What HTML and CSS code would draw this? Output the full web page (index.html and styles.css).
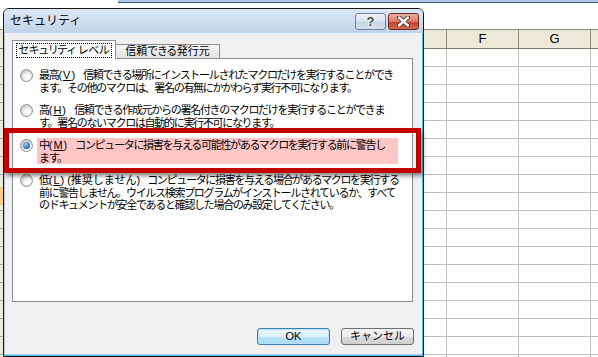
FILE: index.html
```html
<!DOCTYPE html>
<html lang="ja">
<head>
	<meta charset="UTF-8">
	<title>セキュリティ</title>
	<link rel="stylesheet" href="styles.css">
</head>
<body>
	<!-- 背景のワークシート -->
	<div class="sheet">
		<div class="formula"><span class="formula-bar"></span></div>
		<div class="colhead">
			<span class="corner"></span>
			<span class="col col-e"></span>
			<span class="col">F</span>
			<span class="col">G</span>
			<span class="col col-h"></span>
		</div>
		<div class="rows">
			<div class="rowhead"><span class="active-row"></span></div>
			<div class="cells"></div>
		</div>
	</div>

	<!-- ダイアログ -->
	<div class="dialog">
		<div class="titlebar">
			<span class="title">セキュリティ</span>
			<a href="#" class="tb-btn help">?</a>
			<a href="#" class="tb-btn close">
				<svg width="15" height="11" viewBox="0 0 15 11">
					<path d="M3 1.5 L12 9.5 M12 1.5 L3 9.5" stroke="#5a2a24" stroke-width="4.2" stroke-linecap="round"/>
					<path d="M3 1.5 L12 9.5 M12 1.5 L3 9.5" stroke="#fff" stroke-width="2.4" stroke-linecap="round"/>
				</svg>
			</a>
		</div>
		<div class="content">
			<div class="tabs">
				<div class="tab tab-active"><span class="focus">セキュリティ レベル</span></div>
				<div class="tab">信頼できる発行元</div>
			</div>
			<div class="panel">
				<ul class="options">
					<li class="option">
						<span class="radio"></span>
						<p class="text">最高<span class="key">(<u>V</u>)</span>信頼できる場所にインストールされたマクロだけを実行することができ<br>ます。その他のマクロは、署名の有無にかかわらず実行不可になります。</p>
					</li>
					<li class="option">
						<span class="radio"></span>
						<p class="text">高<span class="key">(<u>H</u>)</span>信頼できる作成元からの署名付きのマクロだけを実行することができま<br>す。署名のないマクロは自動的に実行不可になります。</p>
					</li>
					<li class="option">
						<span class="radio checked"></span>
						<p class="text mark">中<span class="key">(<u>M</u>)</span>コンピュータに損害を与える可能性があるマクロを実行する前に警告し<br>ます。</p>
					</li>
					<li class="option">
						<span class="radio"></span>
						<p class="text">低<span class="key key-s">(<u>L</u>)</span><span class="key key-p">(推奨しません)</span>コンピュータに損害を与える場合があるマクロを実行する<br>前に警告しません。ウイルス検索プログラムがインストールされているか、すべて<br>のドキュメントが安全であると確認した場合のみ設定してください。</p>
					</li>
				</ul>
			</div>
			<div class="buttons">
				<input type="button" value="OK" class="btn btn-default">
				<input type="button" value="キャンセル" class="btn">
			</div>
		</div>
	</div>

	<!-- 強調枠 -->
	<div class="callout"></div>
</body>
</html>
```

FILE: styles.css
```css
/*reset*/
div, ul, li, p, span, a, input{
	margin: 0;
	padding: 0;
}
li{
	list-style: none;
}
a{
	text-decoration: none;
	color: #000;
}
html, body{
	margin: 0;
	width: 598px;
	height: 357px;
	overflow: hidden;
}
body{
	position: relative;
	font: 11px/12.5px "Liberation Sans", "Noto Sans CJK JP", sans-serif;
	color: #000;
	background: #fff;
}
/*ワークシート*/
.sheet{
	display: flex;
	flex-direction: column;
	height: 357px;
}
.formula{
	height: 29px;
	padding-left: 118px;
	box-sizing: border-box;
}
.formula-bar{
	display: block;
	height: 2px;
	background: #a9c3e6;
	border-bottom: 1px solid #3b5b8c;
}
.colhead{
	display: flex;
	height: 20px;
	box-sizing: border-box;
	background: #ece9d8;
	border-top: 1px solid #8c8a7c;
	border-bottom: 1px solid #7e7c6a;
}
.corner{
	width: 3px;
}
.col{
	width: 72px;
	box-sizing: border-box;
	border-right: 1px solid #8e8b78;
	font: 13px/18px "Liberation Sans", sans-serif;
	text-align: center;
}
.col-e{
	width: 444px;
}
.col-h{
	flex: 1;
	border-right: none;
}
.rows{
	flex: 1;
	display: flex;
}
.rowhead{
	position: relative;
	width: 3px;
	background: repeating-linear-gradient(to bottom, #ece9d8 0 17px, #aca899 17px 18px);
}
.active-row{
	position: absolute;
	left: 0;
	top: 138px;
	width: 3px;
	height: 18px;
	background: #f9c98a;
}
.cells{
	flex: 1;
	background:
		repeating-linear-gradient(to bottom, transparent 0 17px, #c0c0c0 17px 18px),
		repeating-linear-gradient(to right, transparent 0 71px, #c0c0c0 71px 72px);
	background-position: 0 0, 12px 0;
}
/*ダイアログ*/
.dialog{
	position: absolute;
	left: 3px;
	top: 8px;
	width: 421px;
	height: 349px;
	box-sizing: border-box;
	display: flex;
	flex-direction: column;
	background: #f0f0f0;
	border: 1px solid #161616;
	border-radius: 6px 6px 0 0;
	box-shadow: inset 1px 0 0 #b4cbe4, inset -1px -1px 0 #3cc3ec, inset 0 -2px 0 #b4cbe4;
}
.titlebar{
	display: flex;
	height: 24px;
	padding: 4px 4px 0 6px;
	box-sizing: border-box;
	background: linear-gradient(#dce7f4, #c1d3e9);
	border-radius: 5px 5px 0 0;
}
.title{
	flex: 1;
	font-size: 12px;
	line-height: 17px;
}
.tb-btn{
	display: flex;
	align-items: center;
	justify-content: center;
	width: 31px;
	height: 17px;
	box-sizing: border-box;
	border: 1px solid #6f809a;
	border-radius: 3px;
}
.help{
	margin-right: 2px;
	background: linear-gradient(#eef3fa, #d8e2ef 50%, #c4d3e6 51%, #d3dfee);
	font: bold 13px/15px "Liberation Sans", sans-serif;
	color: #4a4a4a;
	text-shadow: 0 0 1px #fff, 1px 0 0 #fff, -1px 0 0 #fff;
}
.close{
	background: linear-gradient(#eab0a2, #db7a66 50%, #c4412d 51%, #d2674c);
	border-color: #6c2820;
}
.content{
	flex: 1;
	display: flex;
	flex-direction: column;
	padding: 7px 0 0 8px;
}
/*タブ*/
.tabs{
	display: flex;
	align-items: flex-end;
	height: 18px;
	position: relative;
	z-index: 1;
	font-feature-settings: "palt";
}
.tab{
	width: 105px;
	height: 14px;
	margin-left: -1px;
	box-sizing: border-box;
	border: 1px solid #898c95;
	border-bottom: none;
	background: linear-gradient(#f4f4f4, #e3e3e3);
	text-align: center;
	line-height: 13px;
}
.tab-active{
	width: 104px;
	height: 19px;
	margin: 0 0 -1px 0;
	padding: 2px 0 0 3px;
	background: #fff;
	position: relative;
	z-index: 1;
}
.focus{
	display: block;
	width: 96px;
	height: 15px;
	box-sizing: border-box;
	border: 1px dotted #000;
	line-height: 13px;
}
.panel{
	width: 401px;
	height: 244px;
	box-sizing: border-box;
	padding: 10px 0 0 7px;
	background: #fff;
	border: 1px solid #898c95;
}
.options{
	display: flex;
	flex-direction: column;
	gap: 10px;
}
.option{
	display: flex;
	gap: 6px;
}
.radio{
	flex: none;
	width: 13px;
	height: 13px;
	box-sizing: border-box;
	border: 1px solid #8e8f8f;
	border-radius: 50%;
	background: radial-gradient(circle at 60% 65%, #fdfdfd 0 2px, #e2e2e2 5px, #d0d0d0 6px);
	position: relative;
}
.radio.checked::after{
	content: "";
	position: absolute;
	left: 2px;
	top: 2px;
	width: 7px;
	height: 7px;
	border-radius: 50%;
	background: radial-gradient(circle at 40% 35%, #9fd2fb, #2a72c6 60%, #1b4f96);
}
.text{
	letter-spacing: -1.3px;
	white-space: nowrap;
}
.key{
	letter-spacing: 1px;
	margin-right: 7px;
}
.key-s{
	margin-right: 2px;
}
.key-p{
	letter-spacing: 0;
}
.key u{
	text-decoration-thickness: 1px;
	text-underline-offset: 1px;
}
.mark{
	width: 359px;
	margin: -1px 0 0 -2px;
	padding: 1px 0 0 2px;
	background: #ffc6c6;
}
/*ボタン*/
.buttons{
	display: flex;
	justify-content: flex-end;
	gap: 11px;
	margin-top: 26px;
	padding-right: 9px;
}
.btn{
	width: 73px;
	height: 17px;
	border: 1px solid #707070;
	border-radius: 3px;
	background: linear-gradient(#f3f3f3, #ebebeb 50%, #dddddd 51%, #cfcfcf);
	font: 11px/15px "Liberation Sans", "Noto Sans CJK JP", sans-serif;
	color: #000;
}
.btn-default{
	border-color: #3c7fb1;
	background: linear-gradient(#eaf6fd, #d9f0fc 50%, #bee6fd 51%, #a7d9f5);
	box-shadow: inset 0 0 0 1px #b5e2fa;
}
/*強調枠*/
.callout{
	position: absolute;
	left: 4px;
	top: 128px;
	width: 417px;
	height: 45px;
	box-sizing: border-box;
	border: 5px solid #c10000;
	box-shadow: 2px 3px 4px rgba(0, 0, 0, 0.45);
}
```
